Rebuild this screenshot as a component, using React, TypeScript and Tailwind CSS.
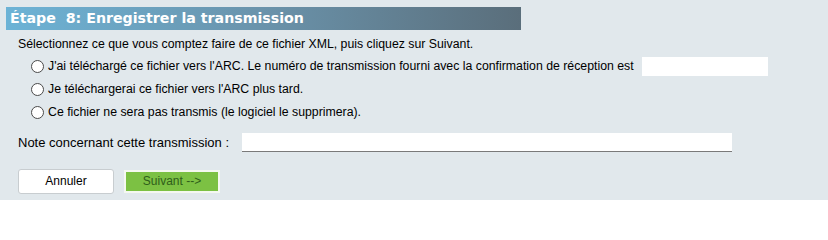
import React, { useState } from 'react';

const Radio: React.FC<{ checked: boolean; onClick: () => void }> = ({ checked, onClick }) => (
  <span
    onClick={onClick}
    className="w-[13px] h-[13px] shrink-0 rounded-full border border-[#4a4a4a] bg-white flex items-center justify-center cursor-pointer"
  >
    {checked && <span className="w-[5px] h-[5px] rounded-full bg-[#333333]" />}
  </span>
);

export default function App() {
  const [choice, setChoice] = useState<number | null>(null);

  const options = [
    "J'ai téléchargé ce fichier vers l'ARC. Le numéro de transmission fourni avec la confirmation de réception est",
    "Je téléchargerai ce fichier vers l'ARC plus tard.",
    'Ce fichier ne sera pas transmis (le logiciel le supprimera).',
  ];

  return (
    <div className="w-[828px] h-[200px] bg-[#e1e8ec] pt-[7px] pl-[6px] font-['Liberation_Sans',Arial,sans-serif] text-[12.3px] text-black overflow-hidden">
      {/* Title bar */}
      <div className="w-[515px] h-[23px] bg-gradient-to-r from-[#6cb3d6] via-[#6a93ab] to-[#5a6e7b] flex items-center pl-[4px]">
        <span className="text-white font-bold text-[14.2px] font-['DejaVu_Sans',Verdana,sans-serif] whitespace-pre">
          Étape  8: Enregistrer la transmission
        </span>
      </div>

      <div className="pl-[12px]">
        <p className="mt-[7px] leading-[14px]">
          Sélectionnez ce que vous comptez faire de ce fichier XML, puis cliquez sur Suivant.
        </p>

        <div className="mt-[6px] pl-[13px] flex flex-col gap-[4px]">
          {options.map((label, i) => (
            <div key={i} className="flex items-center h-[19px]">
              <Radio checked={choice === i} onClick={() => setChoice(i)} />
              <span className="ml-[4px] whitespace-nowrap">{label}</span>
              {i === 0 && (
                <input className="ml-[8px] w-[126px] h-[19px] bg-white outline-none px-[3px]" />
              )}
            </div>
          ))}
        </div>

        <div className="mt-[11px] flex items-center">
          <span className="w-[224px] whitespace-nowrap text-[13px]">Note concernant cette transmission :</span>
          <input className="w-[490px] h-[19px] bg-white border-b border-[#7a7a7a] outline-none px-[3px]" />
        </div>

        <div className="mt-[16px] flex items-center gap-[10px]">
          <button className="w-[96px] h-[25px] bg-white border border-[#c8cdd0] rounded-[3px] text-[12px] text-black">
            Annuler
          </button>
          <button className="w-[96px] h-[23px] bg-[#7cc143] border-2 border-[#f4f8f0] text-[12px] text-[#2f5e1a]">
            Suivant --&gt;
          </button>
        </div>
      </div>
    </div>
  );
}
